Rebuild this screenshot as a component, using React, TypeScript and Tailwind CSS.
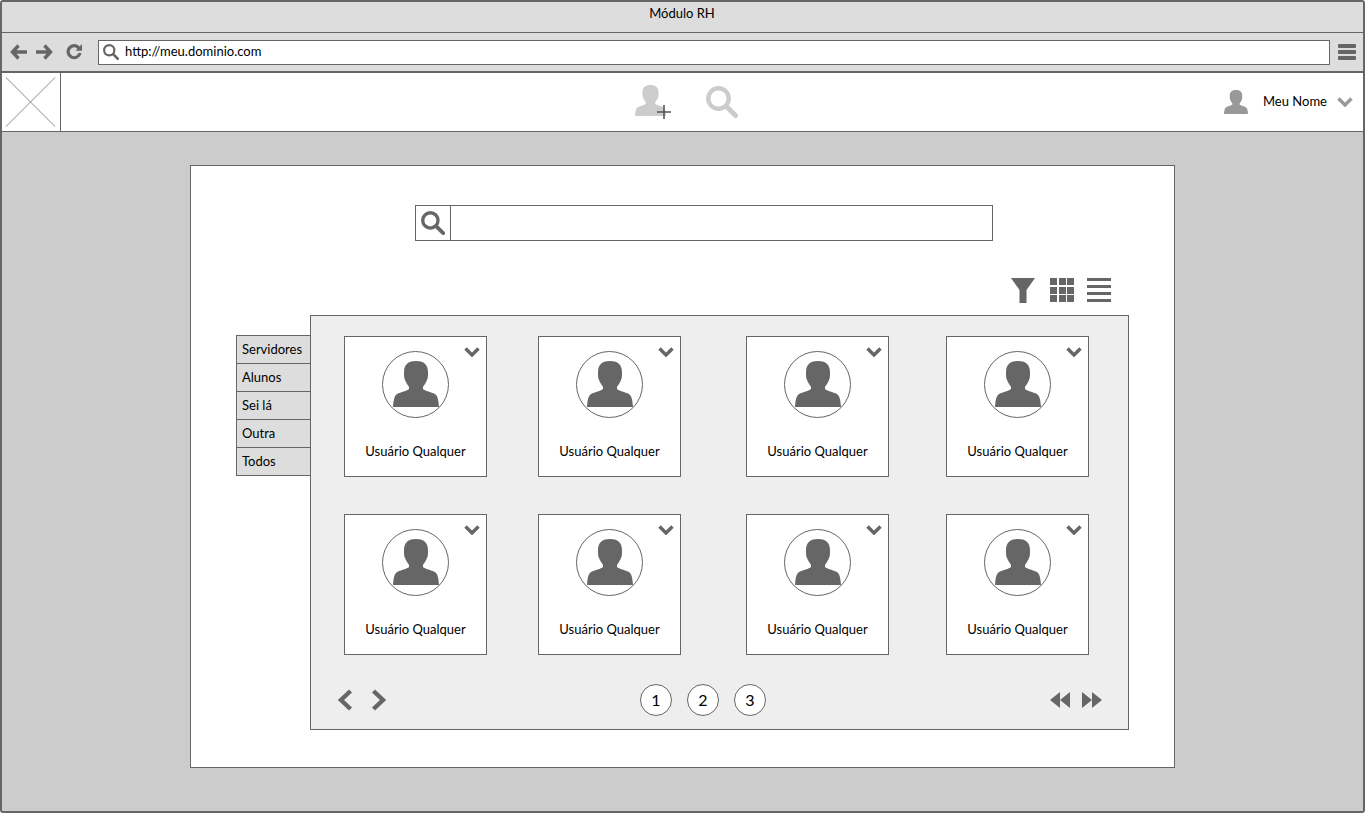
const FONT = "font-['Lato','Open_Sans',sans-serif]";

function Person({ className }: { className: string }) {
  return (
    <svg viewBox="0 0 46 46" className={className} fill="currentColor">
      <path d="M23 0C30 0 35 3 35 11C35 15 35 17 34 19C33 22 31 24 30 26V28C32 30 38 31 42 33C45 35 45.5 40 46 46H0C.5 40 1 35 4 33C8 31 14 30 16 28V26C15 24 13 22 12 19C11 17 11 15 11 11C11 3 16 0 23 0Z" />
    </svg>
  );
}

function Magnifier({ className }: { className: string }) {
  return (
    <svg viewBox="0 0 32 32" className={className} fill="none" stroke="currentColor">
      <circle cx="12.5" cy="12.5" r="10.2" strokeWidth="4.4" />
      <path d="M20.5 20.5L29.5 29.5" strokeWidth="5" strokeLinecap="round" />
    </svg>
  );
}

function Chevron({ className }: { className: string }) {
  return (
    <svg viewBox="0 0 16 10" className={className} fill="none" stroke="currentColor" strokeWidth="3.4">
      <path d="M1.5 1.5L8 8L14.5 1.5" />
    </svg>
  );
}

function Arrow({ flip }: { flip?: boolean }) {
  return (
    <svg viewBox="0 0 17 16" className={`h-4 w-[17px] text-[#666] ${flip ? "-scale-x-100" : ""}`} fill="none" stroke="currentColor" strokeWidth="3.4">
      <path d="M8.5 1.5L2.5 8L8.5 14.5M3 8H17" />
    </svg>
  );
}

function UserCard() {
  return (
    <div className="relative flex h-[141px] w-[143px] flex-col items-center border border-[#666] bg-white pt-[14px]">
      <div className="flex h-[67px] w-[67px] items-end justify-center rounded-full border border-[#666] pb-[10px]">
        <Person className="h-[46px] w-[46px] text-[#666]" />
      </div>
      <Chevron className="absolute right-[6px] top-[10px] h-[10px] w-4 text-[#666]" />
      <span className="mt-[25px] text-[13px] leading-4 text-black">Usuário Qualquer</span>
    </div>
  );
}

function PageButton({ n }: { n: number }) {
  return (
    <div className="flex h-8 w-8 items-center justify-center rounded-full border border-[#666] bg-white text-base text-black">
      {n}
    </div>
  );
}

const tabs = ["Servidores", "Alunos", "Sei lá", "Outra", "Todos"];

export default function App() {
  return (
    <div className={`flex h-[813px] w-[1365px] flex-col overflow-hidden rounded-[3px] border-2 border-[#666] bg-[#ccc] ${FONT}`}>
      <div className="flex h-[30px] items-center justify-center border-b-0 bg-[#ddd] pb-[7px] pr-[1px] text-[13px] text-black">
        Módulo RH
      </div>
      <div className="flex h-[41px] items-center border-b-2 border-t-[1.5px] border-[#666] bg-[#ddd] pl-[8px] pr-[7px]">
        <Arrow />
        <div className="ml-[9px]"><Arrow flip /></div>
        <svg viewBox="0 0 16 16" className="ml-[13px] h-4 w-4 text-[#666]" fill="none" stroke="currentColor" strokeWidth="3.2">
          <path d="M13 4.2A6 6 0 1 0 14 9" />
          <path d="M9.5 6.8H16V0Z" fill="currentColor" stroke="none" />
        </svg>
        <div className="ml-[16px] flex h-[25px] w-[1232px] items-center border border-[#666] bg-white pl-1">
          <Magnifier className="h-4 w-4 text-[#666]" />
          <span className="ml-[6px] text-[13px] text-black">http://meu.dominio.com</span>
        </div>
        <div className="ml-2 flex h-4 w-[18px] flex-col justify-between">
          <div className="h-[4px] rounded-[1px] bg-[#666]" />
          <div className="h-[4px] rounded-[1px] bg-[#666]" />
          <div className="h-[4px] rounded-[1px] bg-[#666]" />
        </div>
      </div>
      <div className="flex h-[59px] items-center border-b border-[#666] bg-white">
        <svg viewBox="0 0 59 58" className="h-[58px] w-[59px] border-r border-[#666]" fill="none" stroke="#888">
          <path d="M4 4L54 54M54 4L4 54" />
        </svg>
        <div className="relative ml-[574px] h-[34px] w-[36px] text-[#ccc]">
          <Person className="h-[31px] w-[31px]" />
          <svg viewBox="0 0 14 14" className="absolute bottom-0 right-0 h-[14px] w-[14px] text-[#555]" stroke="currentColor" strokeWidth="1.6">
            <path d="M0 7H14M7 0V14" />
          </svg>
        </div>
        <Magnifier className="ml-[35px] h-8 w-8 text-[#ccc]" />
        <Person className="ml-[486px] h-6 w-6 text-[#999]" />
        <span className="ml-[15px] text-[13px] text-black">Meu Nome</span>
        <Chevron className="ml-[10px] h-[10px] w-4 text-[#999]" />
      </div>
      <div className="flex-1 px-[188px] pt-[33px]">
        <div className="h-[603px] w-[985px] border border-[#666] bg-white">
          <div className="ml-[224px] mt-[39px] flex h-9 w-[578px] border border-[#666]">
            <div className="flex w-[35px] items-center justify-center border-r border-[#666]">
              <Magnifier className="h-6 w-6 text-[#666]" />
            </div>
          </div>
          <div className="ml-[820px] mt-[36px] flex h-[26px] items-center text-[#666]">
            <svg viewBox="0 0 24 25" className="h-[25px] w-6" fill="currentColor">
              <path d="M0 0H24L15.5 12V25H8.5V12Z" />
            </svg>
            <div className="ml-[15px] grid h-6 w-6 grid-cols-3 gap-[1.5px]">
              {Array.from({ length: 9 }, (_, i) => (
                <div key={i} className="bg-[#666]" />
              ))}
            </div>
            <div className="ml-[13px] flex h-6 w-6 flex-col justify-between">
              <div className="h-[3px] bg-[#666]" />
              <div className="h-[3px] bg-[#666]" />
              <div className="h-[3px] bg-[#666]" />
              <div className="h-[3px] bg-[#666]" />
            </div>
          </div>
          <div className="ml-[45px] mt-[12px] flex">
            <div className="mt-5 w-[74px]">
              {tabs.map((tab) => (
                <div key={tab} className="-mb-px flex h-[29px] items-center border border-r-0 border-[#666] bg-[#ddd] pl-[5px] text-[13px] text-black">
                  {tab}
                </div>
              ))}
            </div>
            <div className="h-[415px] w-[819px] border border-[#666] bg-[#eee] pl-[33px] pt-[20px]">
              <div className="grid grid-cols-[194px_208px_200px_143px] gap-y-[37px]">
                {Array.from({ length: 8 }, (_, i) => (
                  <UserCard key={i} />
                ))}
              </div>
              <div className="mt-[29px] flex items-center text-[#666]">
                <svg viewBox="0 0 17 22" className="-ml-[8px] h-[22px] w-[17px]" fill="none" stroke="currentColor" strokeWidth="4.4">
                  <path d="M14.5 2L5 11L14.5 20" />
                </svg>
                <svg viewBox="0 0 17 22" className="ml-[18px] h-[22px] w-[17px]" fill="none" stroke="currentColor" strokeWidth="4.4">
                  <path d="M2.5 2L12 11L2.5 20" />
                </svg>
                <div className="ml-[252px] flex gap-[15px]">
                  <PageButton n={1} />
                  <PageButton n={2} />
                  <PageButton n={3} />
                </div>
                <svg viewBox="0 0 20 16" className="ml-[284px] h-4 w-5" fill="currentColor">
                  <path d="M10 0V16L0 8ZM20 0V16L10 8Z" />
                </svg>
                <svg viewBox="0 0 20 16" className="ml-[12px] h-4 w-5" fill="currentColor">
                  <path d="M0 0V16L10 8ZM10 0V16L20 8Z" />
                </svg>
              </div>
            </div>
          </div>
        </div>
      </div>
    </div>
  );
}
